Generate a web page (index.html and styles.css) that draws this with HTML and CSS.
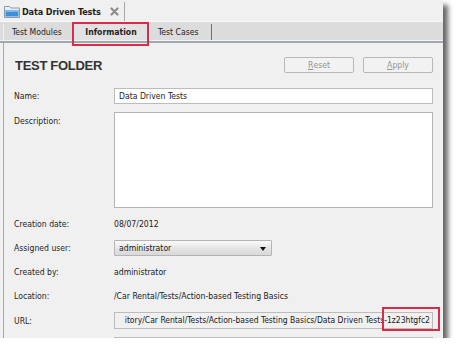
FILE: index.html
```html
<!DOCTYPE html>
<html>
<head>
<meta charset="utf-8">
<link rel="stylesheet" href="styles.css">
</head>
<body>
<div class="window">
  <div class="header">
    <div class="doc-tab">
      <svg class="folder" width="16" height="13" viewBox="0 0 16 13">
        <path d="M0.5 1.5 h5 l1.5 1.5 h8.5 v9.5 h-15 z" fill="#e8eef4" stroke="#8a9aac"/>
        <rect x="1.5" y="5" width="13" height="6.5" fill="#3d8fd6"/>
        <rect x="1.5" y="5" width="13" height="2" fill="#7dbaf0"/>
      </svg>
      <span class="doc-title">Data Driven Tests</span>
      <svg class="close" width="9" height="9" viewBox="0 0 9 9">
        <path d="M1.5 1.5 L7.5 7.5 M7.5 1.5 L1.5 7.5" stroke="#8c8c8c" stroke-width="2.2" stroke-linecap="round"/>
      </svg>
    </div>
  </div>
  <div class="tabstrip">
    <div class="tab">Test Modules</div>
    <div class="tab active">Information</div>
    <div class="tab last">Test Cases</div>
  </div>
  <div class="panel">
    <div class="title-row">
      <div class="title">TEST FOLDER</div>
      <div class="buttons">
        <div class="btn"><u>R</u>eset</div>
        <div class="btn"><u>A</u>pply</div>
      </div>
    </div>
    <div class="form">
      <div class="label">Name:</div>
      <div class="input">Data Driven Tests</div>
      <div class="label top">Description:</div>
      <div class="textarea"></div>
      <div class="label">Creation date:</div>
      <div class="value">08/07/2012</div>
      <div class="label">Assigned user:</div>
      <div class="select-wrap"><div class="select">administrator<span class="arrow"></span></div></div>
      <div class="label">Created by:</div>
      <div class="value">administrator</div>
      <div class="label">Location:</div>
      <div class="value">/Car Rental/Tests/Action-based Testing Basics</div>
      <div class="label">URL:</div>
      <div class="input readonly"><span>itory/Car Rental/Tests/Action-based Testing Basics/Data Driven Tests-1z23htgfc2</span></div>
      <div class="label"></div>
      <div class="input"></div>
    </div>
  </div>
  <div class="mark mark-tab"></div>
  <div class="mark mark-url"></div>
</div>
</body>
</html>
```
FILE: styles.css
```css
html, body {
  margin: 0;
  padding: 0;
  background: #ffffff;
}
body {
  font-family: "DejaVu Sans Condensed", "DejaVu Sans", sans-serif;
  font-stretch: condensed;
  font-size: 8.6px;
  color: #1a1a1a;
}
.window {
  position: relative;
  width: 443px;
  height: 338px;
  background: #f0f0f0;
  overflow: hidden;
  box-shadow: 5px 5px 5px rgba(0, 0, 0, 0.6);
}
.header {
  height: 20px;
  padding-top: 1px;
  border-bottom: 1px solid #f8f8f8;
  display: flex;
}
.doc-tab {
  width: 125px;
  border-right: 1px solid #a6a6a6;
  display: flex;
  align-items: center;
  padding-left: 4px;
  box-sizing: border-box;
  margin-top: 1px;
}
.folder { flex: none; }
.doc-title {
  font-family: "DejaVu Sans", sans-serif;
  font-weight: bold;
  font-size: 9px;
  margin-left: 2px;
  color: #1e1e1e;
  letter-spacing: -0.1px;
}
.close { margin-left: 9px; flex: none; }
.tabstrip {
  height: 18px;
  background: #dcdcdc;
  display: flex;
  align-items: flex-end;
  padding-left: 3px;
  border-bottom: 1px solid #f4f4f4;
  box-shadow: 0 2px 0 #a2a6ae;
  margin-bottom: 2px;
}
.tab {
  height: 16px;
  padding: 0 8px;
  display: flex;
  align-items: center;
  border-left: 1px solid #f0f0f0;
  border-right: 1px solid #c4c4c4;
  color: #222;
}
.tab:first-child { width: 52px; }
.tab.active {
  font-weight: bold;
  background: #e2e2e2;
  width: 58px;
  justify-content: center;
  height: 17px;
  padding: 0 8px 0 8px;
}
.tab.last {
  border-right: 1px solid #6e6e6e;
  width: 45px;
}
.panel {
  margin-left: 3px;
  border-left: 1px solid #a8a8a8;
  padding: 14px 10px 0 10px;
  height: 300px;
}
.title-row {
  display: flex;
  justify-content: space-between;
  align-items: center;
  height: 16px;
  margin-bottom: 15px;
}
.title {
  font-family: "Liberation Sans", Arial, sans-serif;
  font-weight: bold;
  font-size: 13px;
  color: #333;
  letter-spacing: -0.3px;
  margin-left: 1px;
}
.buttons {
  display: flex;
  gap: 9px;
}
.btn {
  width: 70px;
  height: 16px;
  box-sizing: border-box;
  border: 1px solid #b8b8b8;
  border-radius: 2px;
  background: #f2f2f2;
  color: #949494;
  display: flex;
  align-items: center;
  justify-content: center;
}
.btn u { text-decoration: underline; }
.form {
  display: grid;
  grid-template-columns: 100px 1fr;
  row-gap: 8px;
  align-items: center;
}
.label {
  height: 16px;
  line-height: 16px;
  color: #1e1e1e;
}
.label.top {
  align-self: start;
  padding-top: 1px;
}
.input {
  height: 16px;
  box-sizing: border-box;
  border: 1px solid #bcbcbc;
  background: #ffffff;
  padding: 0 4px;
  line-height: 14px;
  white-space: nowrap;
  overflow: hidden;
}
.input.readonly {
  background: #f0f0f0;
  display: flex;
  justify-content: flex-end;
  height: 17px;
  line-height: 15px;
  padding: 0 2px 0 1px;
  font-size: 8.5px;
}
.input.readonly span { flex: none; }
.textarea {
  height: 96px;
  box-sizing: border-box;
  border: 1px solid #b4b4b4;
  background: #ffffff;
}
.value {
  height: 16px;
  line-height: 16px;
}
.select-wrap { display: flex; }
.select {
  width: 158px;
  height: 16px;
  box-sizing: border-box;
  border: 1px solid #b4b4b4;
  border-radius: 1px;
  background: linear-gradient(#fbfbfb, #e4e4e4 55%, #d8d8d8);
  padding: 0 4px;
  line-height: 14px;
  position: relative;
}
.arrow {
  position: absolute;
  right: 5px;
  top: 6px;
  width: 0;
  height: 0;
  border-left: 3px solid transparent;
  border-right: 3px solid transparent;
  border-top: 4px solid #111;
}
.mark {
  position: absolute;
  border: 2px solid #d92b4a;
  box-sizing: border-box;
}
.mark-tab {
  left: 72px;
  top: 22px;
  width: 77px;
  height: 24px;
}
.mark-url {
  left: 382px;
  top: 307px;
  width: 58px;
  height: 24px;
}
```
